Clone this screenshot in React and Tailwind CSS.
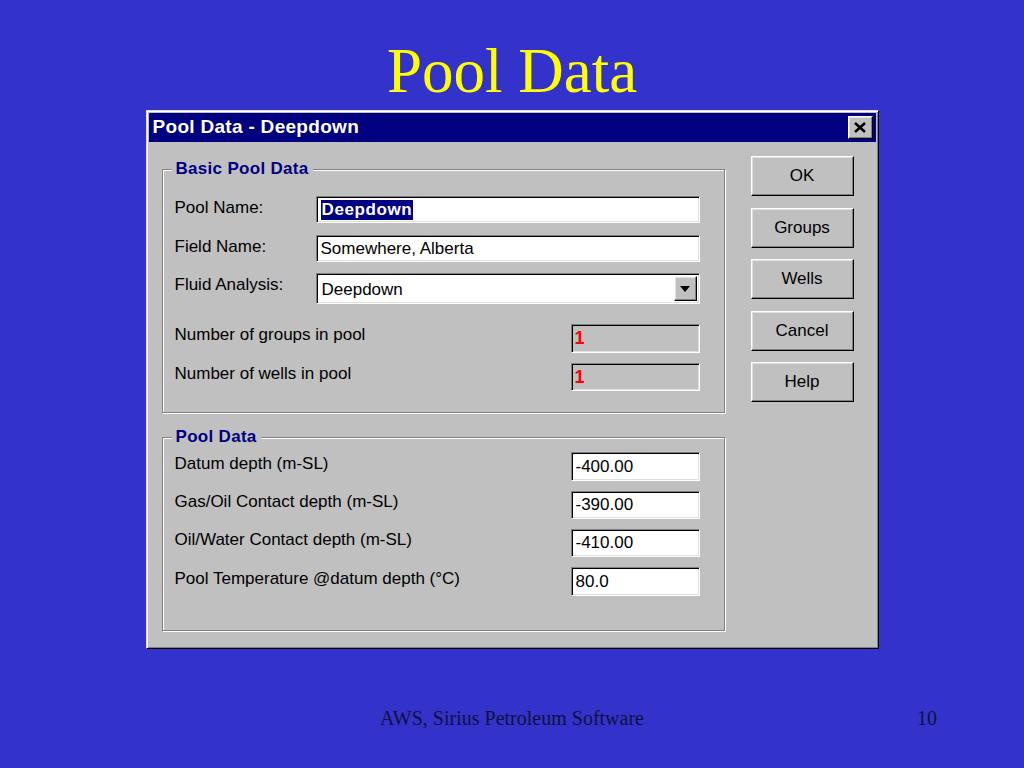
import React from 'react';

const sunken =
  'border border-t-[#808080] border-l-[#808080] border-r-white border-b-white shadow-[inset_1px_1px_0_#000,inset_-1px_-1px_0_#dfdfdf]';
const raised =
  'border border-t-white border-l-white border-r-black border-b-black shadow-[inset_-1px_-1px_0_#808080,inset_1px_1px_0_#dfdfdf]';
const groove = 'border border-[#808080] shadow-[1px_1px_0_#fff,inset_1px_1px_0_#fff]';

const GroupBox = ({ title, className, children }) => (
  <div className={`relative w-[563px] ${groove} ${className}`}>
    <div className="absolute -top-[10px] left-[9px] px-[4px] bg-[#c0c0c0] text-[17px] leading-[18px] font-bold text-[#000080] tracking-[0.3px]">
      {title}
    </div>
    {children}
  </div>
);

const TextBox = ({ value, className = '', selected = false }) => (
  <div className={`flex items-center bg-white pl-[4px] ${sunken} ${className}`}>
    {selected ? (
      <span className="bg-[#000080] text-white font-bold px-[1px] leading-[20px] tracking-[0.6px]">{value}</span>
    ) : (
      <span>{value}</span>
    )}
  </div>
);

const Combo = ({ value }) => (
  <div className={`flex items-center justify-between bg-white h-[31px] w-[384px] pl-[5px] pr-[2px] ${sunken}`}>
    <span className="pt-[2px]">{value}</span>
    <div className={`w-[23px] h-[25px] bg-[#c0c0c0] flex items-center justify-center ${raised}`}>
      <svg width="10" height="6" viewBox="0 0 10 6">
        <path d="M0 0h10L5 6z" fill="#000" />
      </svg>
    </div>
  </div>
);

const ReadOnly = ({ value, className = '' }) => (
  <div className={`flex items-center bg-[#c0c0c0] w-[129px] pl-[3px] ${sunken} ${className}`}>
    <span className="text-[#ff0000] font-bold text-[18px]">{value}</span>
  </div>
);

const Button = ({ label }) => (
  <div className={`w-[103px] h-[40px] bg-[#c0c0c0] flex items-center justify-center text-[17px] text-black ${raised}`}>
    {label}
  </div>
);

const depthRows = [
  ['Datum depth (m-SL)', '-400.00', 'h-[29px]'],
  ['Gas/Oil Contact depth (m-SL)', '-390.00', 'h-[28px]'],
  ['Oil/Water Contact depth (m-SL)', '-410.00', 'h-[28px]'],
  ['Pool Temperature @datum depth (°C)', '80.0', 'h-[29px]'],
];

export default function App() {
  return (
    <div className="w-[1024px] h-[768px] bg-[#3333cc] flex flex-col items-center overflow-hidden">
      <h1 className="pt-[40px] text-[63px] leading-[63px] text-[#ffff00] font-['Liberation_Serif',serif]">
        Pool Data
      </h1>

      <div className="mt-[7px] w-[733px] h-[539px] bg-[#c0c0c0] p-[2px] border border-t-[#dfdfdf] border-l-[#dfdfdf] border-r-black border-b-black shadow-[inset_1px_1px_0_#fff,inset_-1px_-1px_0_#808080] font-['Liberation_Sans',Arial,sans-serif] text-[17px] text-black">
        <div className="h-[29px] bg-[#000080] flex items-center justify-between pl-[4px] pr-[3px]">
          <span className="text-white font-bold text-[19px] tracking-[0.3px]">Pool Data - Deepdown</span>
          <div className={`w-[25px] h-[23px] bg-[#c0c0c0] flex items-center justify-center ${raised}`}>
            <svg width="12" height="11" viewBox="0 0 12 11">
              <path d="M1 1L11 10M11 1L1 10" stroke="#000" strokeWidth="2.4" />
            </svg>
          </div>
        </div>

        <div className="flex items-start pl-[13px]">
          <div className="pt-[27px] flex flex-col">
            <GroupBox title="Basic Pool Data" className="h-[244px] pt-[26px] pl-[12px]">
              <div className="flex items-center h-[27px]">
                <span className="w-[141px] -mt-[4px]">Pool Name:</span>
                <TextBox value="Deepdown" selected className="w-[384px] h-[27px]" />
              </div>
              <div className="flex items-center h-[27px] mt-[12px]">
                <span className="w-[141px] -mt-[4px]">Field Name:</span>
                <TextBox value="Somewhere, Alberta" className="w-[384px] h-[27px]" />
              </div>
              <div className="flex items-center h-[31px] mt-[11px]">
                <span className="w-[141px] -mt-[8px]">Fluid Analysis:</span>
                <Combo value="Deepdown" />
              </div>
              <div className="flex items-center justify-between h-[29px] mt-[20px] pr-[24px]">
                <span className="-mt-[7px]">Number of groups in pool</span>
                <ReadOnly value="1" className="h-[29px]" />
              </div>
              <div className="flex items-center justify-between h-[28px] mt-[10px] pr-[24px]">
                <span className="-mt-[6px]">Number of wells in pool</span>
                <ReadOnly value="1" className="h-[28px]" />
              </div>
            </GroupBox>

            <GroupBox title="Pool Data" className="h-[194px] mt-[24px] pt-[14px] pl-[12px] pr-[24px]">
              <div className="flex flex-col gap-[10px]">
                {depthRows.map(([label, value, h]) => (
                  <div key={label} className={`flex items-center justify-between ${h}`}>
                    <span className="-mt-[6px]">{label}</span>
                    <TextBox value={value} className={`w-[129px] ${h}`} />
                  </div>
                ))}
              </div>
            </GroupBox>
          </div>

          <div className="ml-[26px] pt-[14px] flex flex-col gap-[11.5px]">
            <Button label="OK" />
            <Button label="Groups" />
            <Button label="Wells" />
            <Button label="Cancel" />
            <Button label="Help" />
          </div>
        </div>
      </div>

      <div className="mt-auto mb-[38px] w-full grid grid-cols-[1fr_auto_1fr] items-center text-[20px] leading-[24px] text-[#101040] font-['Liberation_Serif',serif]">
        <span />
        <span>AWS, Sirius Petroleum Software</span>
        <span className="justify-self-end pr-[87px]">10</span>
      </div>
    </div>
  );
}
